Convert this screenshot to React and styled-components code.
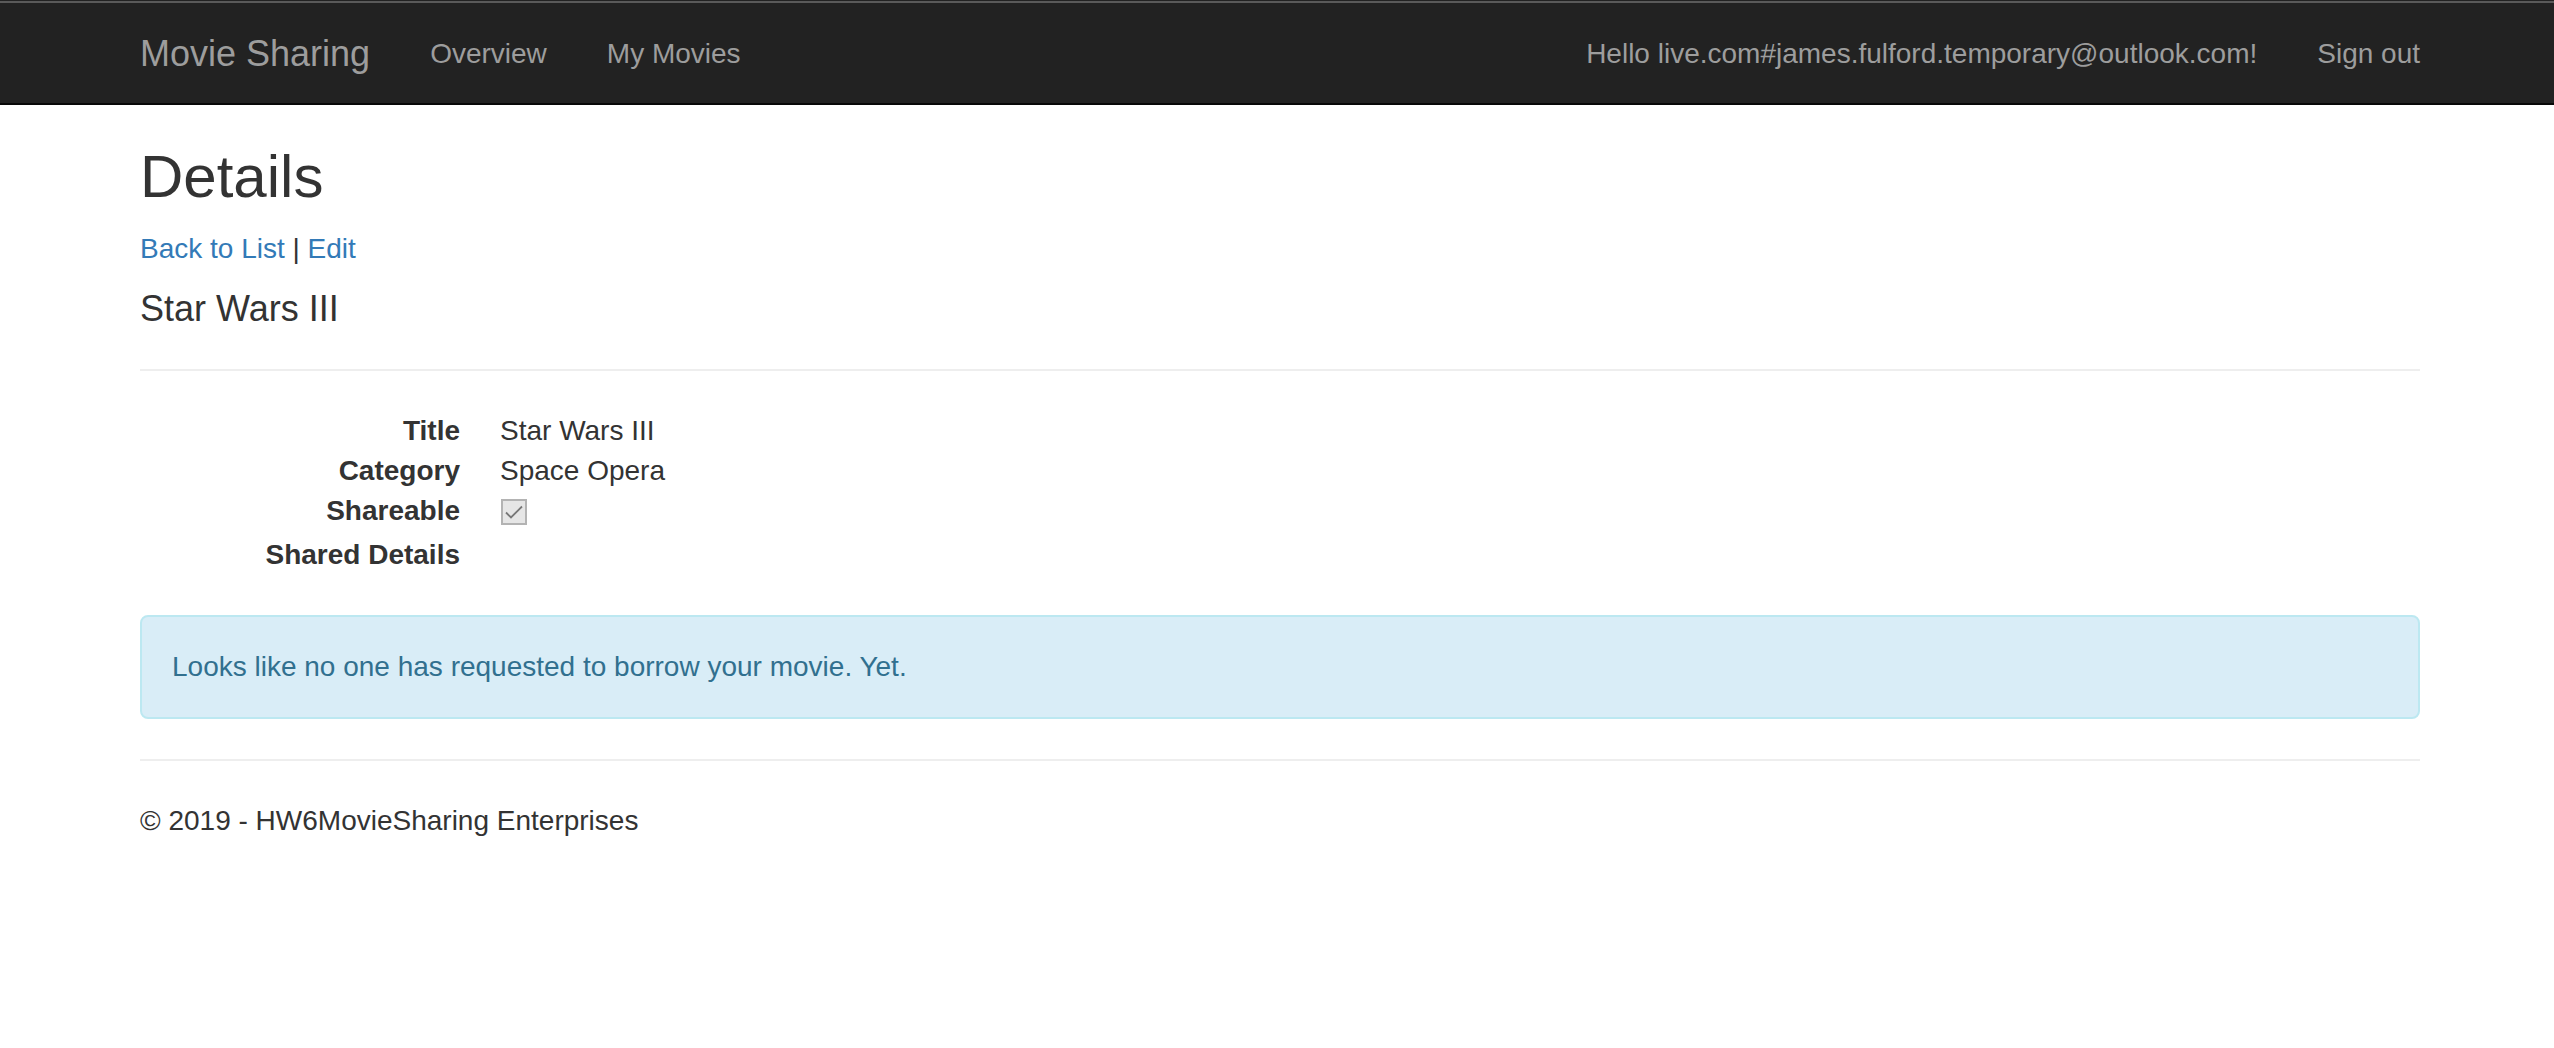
import React from "react";
import styled, { createGlobalStyle } from "styled-components";

const Global = createGlobalStyle`
  html, body { margin: 0; padding: 0; background: #fff; }
  body {
    font-family: "Liberation Sans", Arial, sans-serif;
    font-size: 28px;
    line-height: 40px;
    color: #333;
  }
  * { box-sizing: border-box; }
`;

const TopStrip = styled.div`
  height: 4px;
  background: #222;
  border-top: 1px solid #222;
  border-bottom: 1px solid #222;
  box-shadow: inset 0 2px 0 #5a5a5a;
`;

const Navbar = styled.nav`
  background: #222;
  border-bottom: 2px solid #080808;
  height: 101px;
`;

const Container = styled.div`
  width: 2340px;
  margin: 0 0 0 calc(50% - 1167px);
  padding: 0 30px;
`;

const NavInner = styled(Container)`
  display: flex;
  align-items: stretch;
  height: 99px;
`;

const Brand = styled.a`
  font-size: 36px;
  line-height: 40px;
  padding: 30px 30px 29px;
  margin-left: -30px;
  color: #9d9d9d;
  text-decoration: none;
`;

const NavList = styled.ul`
  display: flex;
  list-style: none;
  margin: 0;
  padding: 0;
  margin-left: ${(p) => (p.$right ? "auto" : "0")};
  margin-right: ${(p) => (p.$right ? "-30px" : "0")};
`;

const NavLink = styled.a`
  display: block;
  padding: 30px 30px 29px;
  line-height: 40px;
  font-size: 28px;
  color: #9d9d9d;
  text-decoration: none;
`;

const Title = styled.h2`
  font-size: 60px;
  font-weight: 500;
  line-height: 66px;
  margin: 39px 0 19px;
`;

const LinkLine = styled.p`
  margin: 0 0 20px;
`;

const Link = styled.a`
  color: #337ab7;
  text-decoration: none;
`;

const Subtitle = styled.h4`
  font-size: 36px;
  font-weight: 500;
  line-height: 39.6px;
  margin: 0;
`;

const Rule = styled.hr`
  border: 0;
  border-top: 2px solid #eee;
  margin: ${(p) => p.$top}px 0 40px;
  height: 0;
`;

const DefList = styled.dl`
  display: grid;
  grid-template-columns: 320px 1fr;
  column-gap: 40px;
  margin: 0 0 40px;
`;

const Term = styled.dt`
  font-weight: 700;
  text-align: right;
  white-space: nowrap;
  line-height: 40px;
  min-height: ${(p) => p.$h || 40}px;
`;

const Desc = styled.dd`
  margin: 0;
  line-height: 40px;
  min-height: ${(p) => p.$h || 40}px;
`;

const CheckBox = styled.span`
  width: 26px;
  height: 26px;
  margin: 8px 0 0 1px;
  border: 2px solid #b3b3b3;
  background: #e6e6e6;
  display: flex;
  align-items: center;
  justify-content: center;
`;

const Alert = styled.div`
  background: #d9edf7;
  border: 2px solid #bce8f1;
  border-radius: 8px;
  color: #31708f;
  padding: 30px;
  margin: 0;
`;

const Footer = styled.footer`
  p { margin: 0; }
`;

export default function App() {
  return (
    <>
      <Global />
      <TopStrip />
      <Navbar>
        <NavInner>
          <Brand href="#">Movie Sharing</Brand>
          <NavList>
            <li><NavLink href="#">Overview</NavLink></li>
            <li><NavLink href="#">My Movies</NavLink></li>
          </NavList>
          <NavList $right>
            <li><NavLink href="#">Hello live.com#james.fulford.temporary@outlook.com!</NavLink></li>
            <li><NavLink href="#">Sign out</NavLink></li>
          </NavList>
        </NavInner>
      </Navbar>
      <Container>
        <Title>Details</Title>
        <LinkLine>
          <Link href="#">Back to List</Link> | <Link href="#">Edit</Link>
        </LinkLine>
        <Subtitle>Star Wars III</Subtitle>
        <Rule $top={40} />
        <DefList>
          <Term>Title</Term>
          <Desc>Star Wars III</Desc>
          <Term>Category</Term>
          <Desc>Space Opera</Desc>
          <Term $h={44}>Shareable</Term>
          <Desc $h={44}>
            <CheckBox>
              <svg width="20" height="16" viewBox="0 0 20 16">
                <path d="M2 8.5 L7 13.5 L18 2.5" fill="none" stroke="#777" strokeWidth="1.8" />
              </svg>
            </CheckBox>
          </Desc>
          <Term>Shared Details</Term>
          <Desc />
        </DefList>
        <Alert>Looks like no one has requested to borrow your movie. Yet.</Alert>
        <Rule $top={40} />
        <Footer>
          <p>© 2019 - HW6MovieSharing Enterprises</p>
        </Footer>
      </Container>
    </>
  );
}
